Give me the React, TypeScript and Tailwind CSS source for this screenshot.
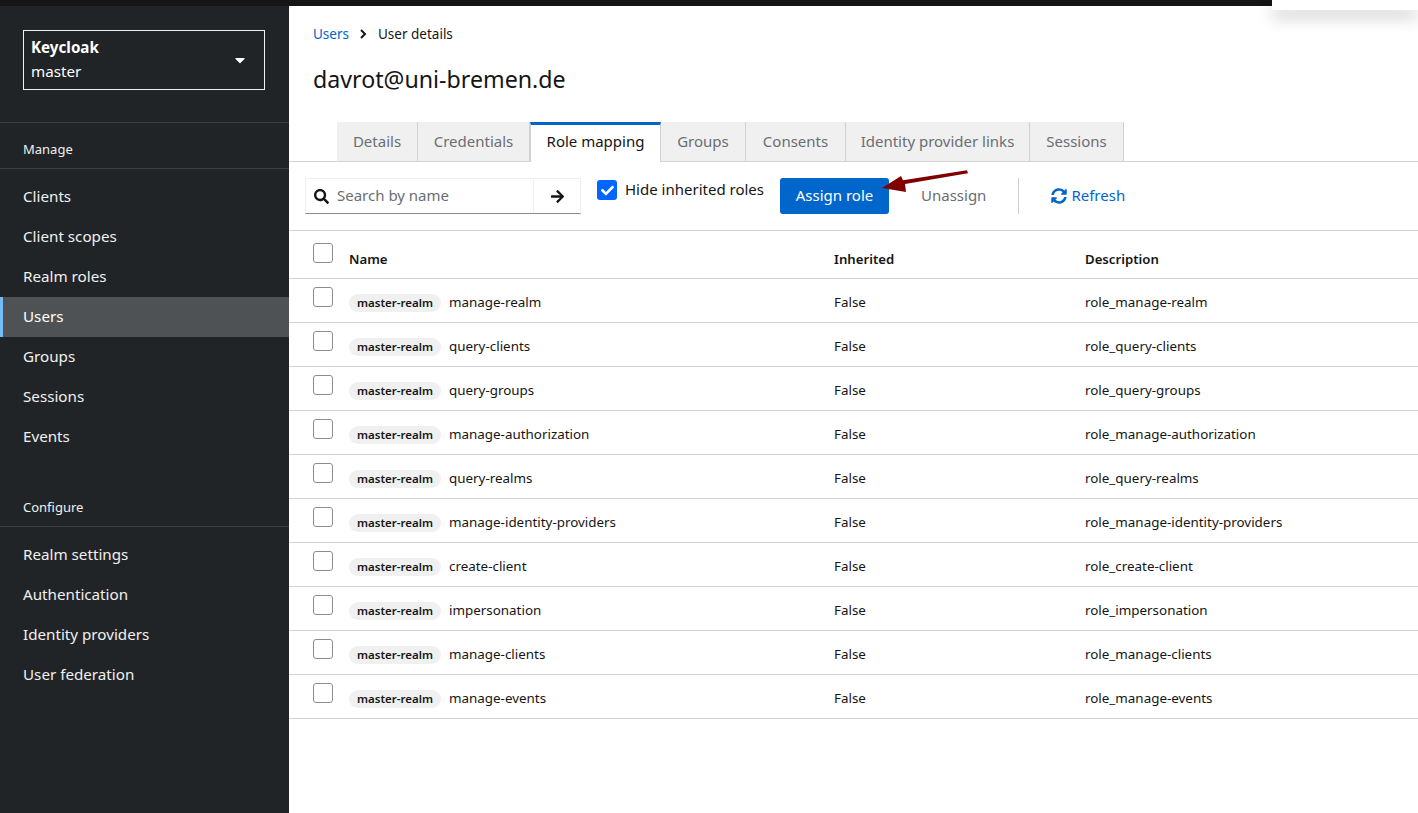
import { FaArrowRight, FaCaretDown, FaCheck, FaSearch, FaSyncAlt } from "react-icons/fa";

const manageItems = ["Clients", "Client scopes", "Realm roles", "Users", "Groups", "Sessions", "Events"];
const configureItems = ["Realm settings", "Authentication", "Identity providers", "User federation"];
const roles = [
  "manage-realm",
  "query-clients",
  "query-groups",
  "manage-authorization",
  "query-realms",
  "manage-identity-providers",
  "create-client",
  "impersonation",
  "manage-clients",
  "manage-events",
];
const tabs = [
  { label: "Details", w: "w-[81px]" },
  { label: "Credentials", w: "w-[112px]" },
  { label: "Role mapping", w: "w-[131px]", active: true },
  { label: "Groups", w: "w-[85px]" },
  { label: "Consents", w: "w-[100px]" },
  { label: "Identity provider links", w: "w-[184px]" },
  { label: "Sessions", w: "w-[94px]" },
];

function NavItem({ label }: { label: string }) {
  const active = label === "Users";
  return (
    <div
      className={
        active
          ? "h-10 flex items-center pb-[2px] pl-[20px] border-l-[3px] border-[#73bcf7] bg-[#4f5255] text-white"
          : "h-10 flex items-center pb-[2px] pl-[23px] text-[#f0f0f0]"
      }
    >
      {label}
    </div>
  );
}

function Box() {
  return <div className="w-5 h-5 rounded-[3px] border border-[#8a8d90] bg-white" />;
}

export default function App() {
  return (
    <div className="relative w-screen h-screen overflow-hidden flex flex-col bg-white text-[#151515] font-['Noto_Sans',sans-serif]">
      <div className="h-[6px] shrink-0 bg-[#151515]" />
      <div className="absolute top-0 right-0 w-[146px] h-[10px] bg-white shadow-[0_8px_16px_rgba(3,3,3,0.2)]" />

      <div className="flex flex-1 min-h-0">
        <aside className="w-[289px] shrink-0 bg-[#212427] text-[15.2px]">
          <div className="pl-[23px] pr-[24px] pt-6 pb-8 border-b border-[#3c3f42]">
            <div className="h-[60px] border border-[#f0f0f0] flex items-center justify-between pl-[7px] pr-[16px] text-white">
              <div className="pb-[2px]">
                <div className="font-bold leading-6">Keycloak</div>
                <div className="leading-6">master</div>
              </div>
              <FaCaretDown className="text-[16px]" />
            </div>
          </div>
          <div className="h-[46px] flex items-end pb-[9px] pl-[23px] text-[13px] text-[#f0f0f0] border-b border-[#3c3f42] mb-[8px]">
            Manage
          </div>
          {manageItems.map((item) => (
            <NavItem key={item} label={item} />
          ))}
          <div className="h-[70px] pt-[25px] flex items-end pb-[9px] pl-[23px] text-[13px] text-[#f0f0f0] border-b border-[#3c3f42] mb-[8px]">
            Configure
          </div>
          {configureItems.map((item) => (
            <NavItem key={item} label={item} />
          ))}
        </aside>

        <main className="flex-1 min-w-0">
          <div className="pl-6 pt-[18px] pb-[1px] h-[20px] flex items-center gap-[11px] text-[13.5px] box-content">
            <span className="text-[#06c]">Users</span>
            <svg width="7" height="10" viewBox="0 0 7 10" fill="none" stroke="#151515" strokeWidth="2">
              <path d="M1 1l4 4-4 4" />
            </svg>
            <span>User details</span>
          </div>
          <h1 className="pl-6 mt-[18px] text-[23.2px] leading-[32px]">davrot@uni-bremen.de</h1>

          <div className="mt-[27px] pl-12 h-[39px] flex border-b border-[#d2d2d2] box-content">
            {tabs.map((tab) =>
              tab.active ? (
                <div
                  key={tab.label}
                  className={`${tab.w} h-[40px] pb-[5px] flex items-center justify-center bg-white border-t-[3px] border-x border-x-[#d2d2d2] border-t-[#06c] text-[15px] text-[#151515]`}
                >
                  {tab.label}
                </div>
              ) : (
                <div
                  key={tab.label}
                  className={`${tab.w} h-[39px] flex items-center justify-center bg-[#f0f0f0] border-r border-[#d2d2d2] text-[15px] text-[#6a6e73]`}
                >
                  {tab.label}
                </div>
              ),
            )}
          </div>

          <div className="h-[69px] pl-4 pt-4 flex items-start border-b border-[#d2d2d2] text-[15px]">
            <div className="w-[276px] h-9 flex border border-[#f0f0f0] border-b-[#8a8d90]">
              <div className="w-[228px] flex items-center pl-2 pb-[2px] gap-2 border-r border-[#f0f0f0]">
                <FaSearch className="text-[15px] text-[#151515] mt-[2px]" />
                <span className="text-[#6a6e73]">Search by name</span>
              </div>
              <div className="flex-1 flex items-center justify-center">
                <FaArrowRight className="text-[15px] text-[#151515]" />
              </div>
            </div>
            <div className="ml-4 mt-[2px] w-5 h-5 rounded-[3px] bg-[#06f] flex items-center justify-center">
              <FaCheck className="text-[13px] text-white" />
            </div>
            <span className="ml-2 leading-[22px]">Hide inherited roles</span>
            <div className="ml-4 w-[109px] h-9 pb-[2px] rounded-[3px] bg-[#06c] text-white flex items-center justify-center">
              Assign role
            </div>
            <div className="ml-8 h-9 pb-[2px] flex items-center text-[#6a6e73]">Unassign</div>
            <div className="ml-8 w-px h-9 bg-[#d2d2d2]" />
            <div className="ml-8 h-9 flex items-center gap-[4px] text-[#06c]">
              <FaSyncAlt className="text-[16px]" />
              <span className="pb-[2px]">Refresh</span>
            </div>
          </div>

          <div className="grid grid-cols-[60px_485px_251px_1fr] h-[48px] border-b border-[#d2d2d2] text-[13.2px] font-semibold">
            <div className="pl-6 pt-[12px]">
              <Box />
            </div>
            <div className="pt-[19px]">Name</div>
            <div className="pt-[19px]">Inherited</div>
            <div className="pt-[19px]">Description</div>
          </div>
          {roles.map((role) => (
            <div key={role} className="grid grid-cols-[60px_485px_251px_1fr] h-[44px] border-b border-[#d2d2d2] text-[13.4px]">
              <div className="pl-6 pt-[8px]">
                <Box />
              </div>
              <div className="flex items-center gap-2 pt-[4px]">
                <span className="h-[18px] px-2 rounded-full bg-[#f0f0f0] flex items-center text-[11.5px] font-semibold">
                  master-realm
                </span>
                <span>{role}</span>
              </div>
              <div className="flex items-center pt-[4px]">False</div>
              <div className="flex items-center pt-[4px]">role_{role}</div>
            </div>
          ))}
        </main>
      </div>

      <svg className="absolute left-[880px] top-[168px] w-[92px] h-[28px]" viewBox="880 168 92 28" fill="#800000">
        <path d="M967 170.3l1 3-63 10.7 1 8-24-4 19-12 2 4.2z" />
      </svg>
    </div>
  );
}
